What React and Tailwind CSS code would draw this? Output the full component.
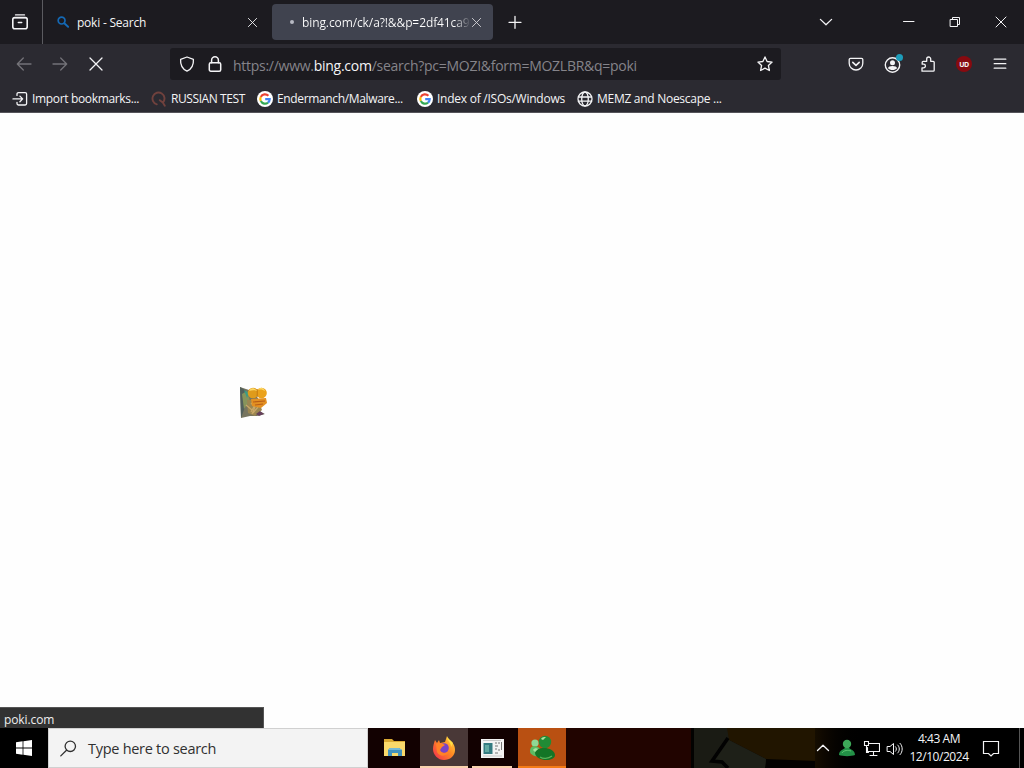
import React from "react";

const Icon = ({ size = 16, box = 16, className = "", children }) => (
  <svg
    width={size}
    height={size}
    viewBox={`0 0 ${box} ${box}`}
    fill="none"
    stroke="currentColor"
    strokeWidth="1.3"
    strokeLinecap="round"
    strokeLinejoin="round"
    className={`shrink-0 ${className}`}
  >
    {children}
  </svg>
);

const CloseIcon = ({ size = 16, className = "" }) => (
  <Icon size={size} className={className}>
    <path d="M2 2l12 12M14 2L2 14" />
  </Icon>
);

const GoogleIcon = () => (
  <svg width="16" height="16" viewBox="0 0 16 16" fill="none" className="shrink-0">
    <circle cx="8" cy="8" r="8" fill="#fff" />
    <g strokeWidth="2.2">
      <path d="M11.4 4.8A4.7 4.7 0 0 0 3.8 5.9" stroke="#ea4335" />
      <path d="M3.8 5.9a4.7 4.7 0 0 0 0 4.2" stroke="#fbbc05" />
      <path d="M3.8 10.1a4.7 4.7 0 0 0 7.2 1.5" stroke="#34a853" />
      <path d="M11 11.6A4.7 4.7 0 0 0 12.7 8.2H8.2" stroke="#4285f4" />
    </g>
  </svg>
);

const GlobeIcon = () => (
  <Icon>
    <circle cx="8" cy="8" r="7" />
    <ellipse cx="8" cy="8" rx="3.3" ry="7" />
    <path d="M1.4 6h13.2M1.4 10.2h13.2" />
  </Icon>
);

const TabStrip = () => (
  <div className="flex h-11 items-center bg-[#1c1b20]">
    <div className="flex h-11 w-[43px] shrink-0 items-center border-r border-[#5b5b60] pl-3">
      <Icon>
        <path d="M3.5 .9h9" />
        <path d="M2.3 3.6h11.4" />
        <rect x=".8" y="3.6" width="14.4" height="11.2" rx="2" strokeWidth="1.6" />
        <path d="M6.3 8.4h3.4" strokeWidth="1.5" />
      </Icon>
    </div>
    <div className="flex w-[229px] shrink-0 items-center pl-[14px]">
      <Icon size={12} box={12} className="text-[#1469b5]">
        <circle cx="4.6" cy="4.6" r="3.4" strokeWidth="1.7" />
        <path d="M7.3 7.3l3.8 3.5" strokeWidth="1.9" />
      </Icon>
      <span className="ml-2 w-[170px] pt-[2px] text-[12px] tracking-[-0.22px]">poki - Search</span>
      <CloseIcon size={11} />
    </div>
    <div className="flex h-9 w-[221px] shrink-0 items-center rounded-[4px] bg-[#40434f] pl-[18px]">
      <span className="size-1 shrink-0 rounded-full bg-[#b7bac3]" />
      <span className="ml-2 w-[169px] overflow-hidden bg-linear-to-r from-white from-90% to-transparent bg-clip-text pt-[2px] text-[12px] tracking-[-0.1px] text-transparent">
        bing.com/ck/a?!&amp;&amp;p=2df41ca9
      </span>
      <CloseIcon size={11} className="text-[#d5d5da]" />
    </div>
    <Icon className="ml-[14px]">
      <path d="M8 2.3v12M2 8.3h12" />
    </Icon>
    <Icon className="ml-[296px]" size={14} box={14}>
      <path d="M1.4 4.4L7 9.7l5.6-5.3" />
    </Icon>
    <Icon className="ml-[70px]" size={12} box={12}>
      <path d="M.5 5.5h10.500" strokeWidth="1" />
    </Icon>
    <Icon className="ml-[34px]" size={12} box={12}>
      <path d="M1.5 3.5h7v7h-7zM3.5 3.5v-2h7v7h-2" strokeWidth="1" strokeLinejoin="miter" />
    </Icon>
    <Icon className="ml-[34px]" size={12} box={12}>
      <path d="M1 1l10 10M11 1L1 11" strokeWidth="1" />
    </Icon>
  </div>
);

const NavBar = () => (
  <div className="flex h-10 items-center bg-[#2b2a31] pl-4">
    <Icon className="text-[#737278]">
      <path d="M15 8H1.5M7.3 2L1.3 8l6 6" />
    </Icon>
    <Icon className="ml-5 text-[#737278]">
      <path d="M1 8h13.5M8.7 2l6 6-6 6" />
    </Icon>
    <CloseIcon className="ml-5" />
    <div className="ml-[66px] flex h-8 w-[611px] shrink-0 items-center rounded-[3px] bg-[#1c1b20] pl-[9px]">
      <Icon>
        <path d="M8 1L1.6 3.3C1.2 9 3.8 13.3 8 15.2 12.2 13.3 14.8 9 14.4 3.3Z" />
      </Icon>
      <Icon className="ml-3">
        <rect x="2.3" y="6.8" width="11.4" height="8.4" rx="1.5" strokeWidth="1.5" />
        <path d="M4.6 6.8V4.2a3.4 3.4 0 0 1 6.8 0v2.6" strokeWidth="1.5" />
      </Icon>
      <span className="ml-[10px] w-[524px] pt-[2px] text-[14px] tracking-[-0.27px] text-[#85848a]">
        https://www.<span className="text-[#f4f4f6]">bing.com</span>/search?pc=MOZI&amp;form=MOZLBR&amp;q=poki
      </span>
      <Icon>
        <path d="M8 .9l2.1 4.6 5 .6-3.7 3.4 1 5L8 12.1l-4.4 2.4 1-5L.9 6.1l5-.6z" />
      </Icon>
    </div>
    <Icon className="ml-[67px]">
      <path d="M2.5 2.3h11a1.3 1.3 0 0 1 1.3 1.3v3.6a6.8 6.8 0 0 1-13.6 0V3.6a1.3 1.3 0 0 1 1.3-1.3z" />
      <path d="M4.8 6.3L8 9.3l3.2-3" strokeWidth="1.6" />
    </Icon>
    <div className="relative ml-5 shrink-0">
      <Icon size={17} box={17}>
        <circle cx="8.5" cy="9" r="7.2" strokeWidth="1.4" />
        <circle cx="8.5" cy="6.8" r="2.5" fill="currentColor" stroke="none" />
        <path d="M4 12.2c0-3 9-3 9 0-2 2.4-7 2.4-9 0z" fill="currentColor" stroke="none" />
      </Icon>
      <span className="absolute -top-[2px] left-[12px] size-[7px] rounded-full bg-[#1d9dbb]" />
    </div>
    <Icon className="ml-[19px]">
      <path d="M2 15.2h11.2a1 1 0 0 0 1-1V6.3a1 1 0 0 0-1-1h-2.5V3a2 2 0 0 0-4 0v2.3H3.2a1 1 0 0 0-1 1v1.9h1.4a1.8 1.8 0 0 1 0 3.6H2z" />
    </Icon>
    <div className="ml-[20px] flex size-4 shrink-0 items-center justify-center rounded-full bg-[#880a10] text-[7px] leading-none font-bold tracking-[-0.6px]">
      UD
    </div>
    <Icon className="ml-[20px]">
      <path d="M2.2 3.2h11.6M2.2 7.7h11.6M2.2 12.2h11.6" />
    </Icon>
  </div>
);

const Bookmark = ({ icon, width, tracking, children }) => (
  <div className={`flex shrink-0 items-center gap-1 ${width}`}>
    {icon}
    <span className={`pt-px text-[12px] ${tracking}`}>{children}</span>
  </div>
);

const BookmarksBar = () => (
  <div className="flex h-[29px] items-center border-b border-[#55545a] bg-[#2b2a31] pt-px pl-3">
    <Bookmark
      width="w-[139px]"
      tracking="tracking-[-0.34px]"
      icon={
        <Icon>
          <path d="M5 4.4V3a1.4 1.4 0 0 1 1.4-1.4h6.8A1.4 1.4 0 0 1 14.6 3v9.6a1.4 1.4 0 0 1-1.4 1.4H6.4A1.4 1.4 0 0 1 5 12.6v-1.3" />
          <path d="M1 7.9h9.4M7.9 5.1l2.8 2.8-2.8 2.8" />
        </Icon>
      }
    >
      Import bookmarks...
    </Bookmark>
    <Bookmark
      width="w-[106px]"
      tracking="tracking-[-0.42px]"
      icon={
        <Icon className="text-[#70413d]">
          <path d="M5.8 13.3A6 6 0 1 1 12 11.5M8.8 9.2l3 2.3 2 3.2" strokeWidth="1.9" />
        </Icon>
      }
    >
      RUSSIAN TEST
    </Bookmark>
    <Bookmark width="w-[160px]" tracking="tracking-[-0.35px]" icon={<GoogleIcon />}>
      Endermanch/Malware...
    </Bookmark>
    <Bookmark width="w-[160px]" tracking="tracking-[-0.25px]" icon={<GoogleIcon />}>
      Index of /ISOs/Windows
    </Bookmark>
    <Bookmark width="w-[160px]" tracking="tracking-[-0.28px]" icon={<GlobeIcon />}>
      MEMZ and Noescape ...
    </Bookmark>
  </div>
);

const PageCursor = () => (
  <svg width="30" height="34" viewBox="0 0 30 34" className="mt-[273px] ml-[239px]">
    <path d="M1 1l9 3 9 8 1 13 6 3-8 2-7 0-9 2z" fill="#77755f" />
    <path d="M1 1l5 3 3 9-3 8-4 11z" fill="#52605c" />
    <path d="M3 8l5-3 3 10-6 8z" fill="#87945b" />
    <path d="M5 4l5 3-2 5z" fill="#3a9b87" />
    <path d="M8 14l11 0 4 10-7 6-7-3z" fill="#9b8651" />
    <path d="M12 17l4 4-3 7M17 17l-5 9M7 19l6 5M19 21l-5 6" stroke="#c9a869" strokeWidth="1.2" fill="none" />
    <circle cx="14" cy="7" r="5.3" fill="#df9b1b" />
    <circle cx="22.500" cy="7" r="5.300" fill="#eba21b" />
    <path d="M18.200 3v8" stroke="#b36c10" strokeWidth=".8" />
    <path d="M10 5c2-4 6-3 8 0-2-1-5-1-8 0zM19 4c2-4 6-2 7 1-2-1-4-2-7-1z" fill="#fbd766" />
    <path d="M12 13l15-1 1 5-6 5-9-2z" fill="#e39022" />
    <path d="M14 16l12-1M16 19l8-1" stroke="#b95d17" strokeWidth="1.2" />
    <path d="M17 28l4-3 4 3-5 2z" fill="#65405b" />
  </svg>
);

const Page = () => (
  <div className="flex grow flex-col justify-between bg-[#fefefe]">
    <PageCursor />
    <div className="flex h-[21px] w-[264px] items-center border-t border-r border-[#555] bg-[#323232] pt-[3px] pl-1 text-[12px] tracking-[-0.1px] text-[#eee]">
      poki.com
    </div>
  </div>
);

const FolderIcon = () => (
  <svg width="24" height="20" viewBox="0 0 24 20">
    <path d="M1 1h8l2 2h11v15H1z" fill="#d9a933" />
    <path d="M1 4h21v14H1z" fill="#f9d96b" />
    <path d="M5 18v-6l2-2h9l3 2v6h-4v-3H9v3z" fill="#4292bd" />
    <path d="M7 10h9l3 2H5z" fill="#74b9d6" />
  </svg>
);

const FirefoxIcon = () => (
  <svg width="24" height="24" viewBox="0 0 24 24">
    <defs>
      <linearGradient id="fox" x1="1" y1="0" x2="0" y2="1">
        <stop offset="0" stopColor="#ffe247" />
        <stop offset=".45" stopColor="#ff8a22" />
        <stop offset="1" stopColor="#f12754" />
      </linearGradient>
    </defs>
    <path d="M3 4l2 3 2-3 1 3 5-1 2-6 2 4c4 2 6 6 6 10 0 6-5 10-11 10S1 19 1 13c0-3 1-6 2-9z" fill="url(#fox)" />
    <circle cx="12" cy="12" r="4.800" fill="#7843c7" />
    <path d="M4 8c3-2 6-1 9 1l-3 2-2 3c2 4 6 4 9 1-1 5-9 7-12 1z" fill="#ff8228" />
    <path d="M15 1c0 4 4 5 4 10l2-4-4-4z" fill="#ffde45" />
  </svg>
);

const AppWindowIcon = () => (
  <svg width="23" height="19" viewBox="0 0 23 19">
    <path d="M0 0h23v19H0z" fill="#f3f3f3" />
    <path d="M2.5 4h9v11h-9z" fill="#347b81" />
    <path d="M4 6h4v7H4z" fill="#61a9a2" />
    <path d="M14 4h2m1 0h2M14 7h3m-3 3h2m1 1h2m-5 3h3M20.5 3v8" stroke="#777" strokeWidth="1" />
    <path d="M2 1.5h18M2 17h19" stroke="#c8c8c8" />
  </svg>
);

const MessengerIcon = () => (
  <svg width="28" height="26" viewBox="0 0 28 26">
    <circle cx="7" cy="8" r="3.600" fill="#8fd795" />
    <path d="M2 16c0-7 9-6 11 0l-1 5c-5 1-10-1-10-5z" fill="#5dbb62" />
    <circle cx="17" cy="7" r="6.200" fill="#218b35" />
    <path d="M7 18c1-7 19-7 20 2 0 7-19 7-20-2z" fill="#137526" />
    <path d="M5 15c1-2 4-2 5-1l-3 3zM13 4c1-2 3-2 5-2l-3 3z" fill="#a8e3a0" />
    <path d="M12 22c3 2 8 2 12-1" stroke="#5ab258" strokeWidth="1.2" fill="none" />
  </svg>
);

const Wallpaper = () => (
  <svg width="124" height="40" viewBox="0 0 124 40" className="shrink-0">
    <path d="M0 0h124v40H0z" fill="#030201" />
    <path d="M3 0h40l-5 12 37 19-1 9H3z" fill="#1a1b14" />
    <path d="M36 0h88v33l-49-2-37-19z" fill="#211500" />
    <path d="M38 12l37 19-1 9H36l-12-8z" fill="#1e2018" />
    <path d="M37 10L21 33l10 1 6 6" stroke="#020202" strokeWidth="3.500" fill="none" />
  </svg>
);

const TaskButton = ({ className, line, children }) => (
  <div className={`flex h-10 shrink-0 flex-col items-center justify-between ${className}`}>
    <div className="flex h-[38px] items-center pt-[2px]">{children}</div>
    <div className={`h-[2px] ${line}`} />
  </div>
);

const Tray = () => (
  <div className="flex h-10 grow items-center bg-black bg-linear-to-r from-[#150d00] to-black to-25% pl-px">
    <Icon size={14} box={14}>
      <path d="M1.5 9.5L7 4.2l5.5 5.3" />
    </Icon>
    <svg width="18" height="18" viewBox="0 0 18 18" className="ml-2 shrink-0">
      <circle cx="9" cy="5" r="4.2" fill="#3da858" />
      <path d="M1 16c0-4 3-5 6-7h4c3 2 6 3 6 7-4 1.500-12 1.500-16 0z" fill="#239147" />
      <path d="M4 14c2-3 6-3 9-2" stroke="#5cc571" fill="none" />
    </svg>
    <Icon size={17} box={17} className="ml-[7px]">
      <path d="M5.500 3.500h11v8h-12v-4M10.500 11.500v4M7 15.500h7M1.500 1.500h4v4h-4zM3.500 5.500v7h2" strokeWidth="1.100" strokeLinejoin="miter" />
    </Icon>
    <Icon size={17} box={17} className="ml-[6px]">
      <path d="M1.500 6.500H4l3.500-3v11l-3.500-3H1.500zM9.500 6.700c1.200 1.200 1.200 3.400 0 4.600M11.700 5c2.200 2 2.200 6 0 8M14 3.300c3 3 3 8.400 0 11.400" strokeWidth="1" />
    </Icon>
    <div className="ml-[2px] flex w-[68px] shrink-0 flex-col items-center text-[12px] leading-[18px] tracking-[-0.45px] whitespace-nowrap">
      <span>4:43 AM</span>
      <span>12/10/2024</span>
    </div>
    <Icon size={18} box={18} className="ml-[9px]">
      <path d="M1.5 2.5h15v12h-5l-2.5 2.5-2.5-2.5h-5z" strokeWidth="1.2" strokeLinejoin="miter" />
    </Icon>
    <div className="ml-[19px] h-10 w-px bg-[#555]" />
  </div>
);

const Taskbar = () => (
  <div className="flex h-10 shrink-0 items-center bg-black">
    <div className="flex w-12 shrink-0 items-center pl-4">
      <svg width="16" height="16" viewBox="0 0 16 16" fill="#fff">
        <path d="M0 2.2l6.6-.9v6.3H0zM7.4 1.2L16 0v7.6H7.4zM0 8.4h6.6v6.3L0 13.8zM7.4 8.4H16V16l-8.6-1.2z" />
      </svg>
    </div>
    <div className="flex h-10 w-80 shrink-0 items-center border border-[#d0d0d0] bg-[#f3f3f3] pl-[11px] text-[#303030]">
      <Icon size={17} box={17}>
        <circle cx="10.3" cy="6.3" r="5.2" strokeWidth="1.3" />
        <path d="M6.5 10.2L.8 15.9" />
      </Icon>
      <span className="ml-[11px] pt-px text-[14.5px] tracking-[-0.28px]">Type here to search</span>
    </div>
    <TaskButton className="w-[52px] bg-[#120101] pl-px" line="w-0">
      <FolderIcon />
    </TaskButton>
    <TaskButton className="w-12 bg-[#493837]" line="w-12 bg-[#f9d2ae]">
      <FirefoxIcon />
    </TaskButton>
    <TaskButton className="w-[50px] bg-[#120101] pr-[2px]" line="w-10 bg-[#f9d2ae]">
      <AppWindowIcon />
    </TaskButton>
    <TaskButton className="w-12 bg-[#b95012]" line="w-12 bg-[#f47a16]">
      <MessengerIcon />
    </TaskButton>
    <div className="h-10 w-[125px] shrink-0 bg-[#210400]" />
    <Wallpaper />
    <Tray />
  </div>
);

export default function App() {
  return (
    <div className="flex h-[768px] w-[1024px] flex-col overflow-hidden font-['Open_Sans',sans-serif] whitespace-nowrap text-[#f4f4f6]">
      <TabStrip />
      <NavBar />
      <BookmarksBar />
      <Page />
      <Taskbar />
    </div>
  );
}
